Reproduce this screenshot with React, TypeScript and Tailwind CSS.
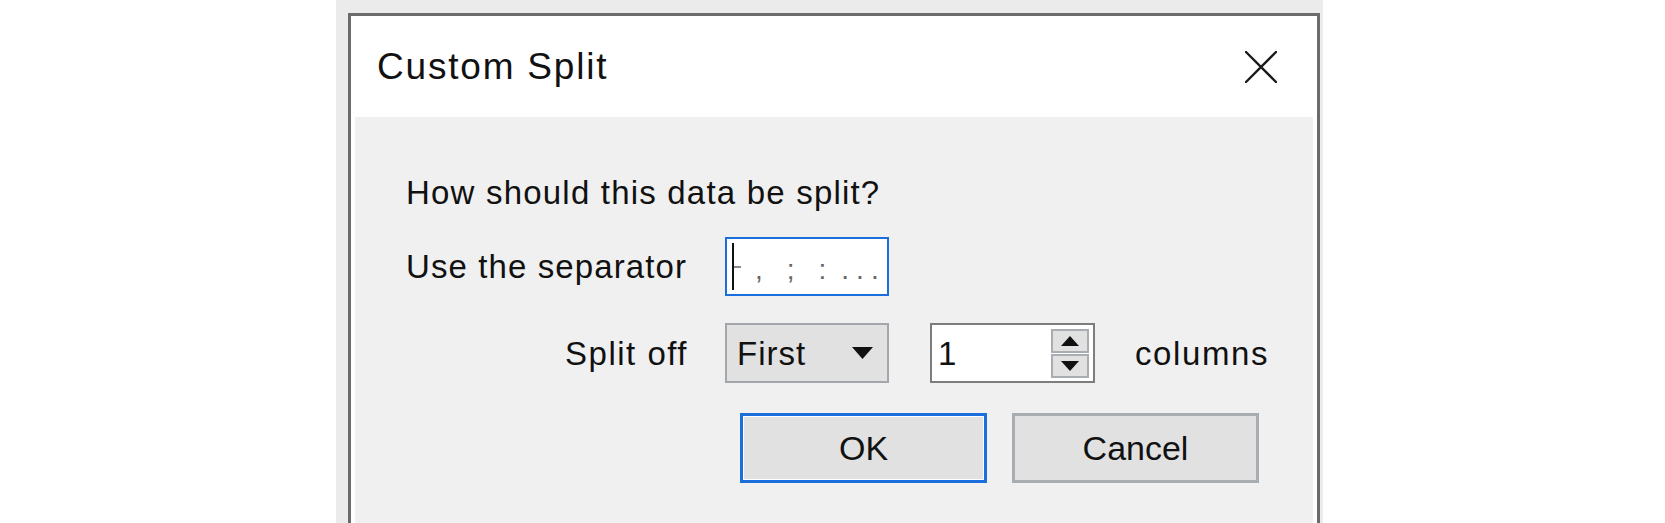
function SpinArrow({ up }: { up?: boolean }) {
  return (
    <svg width="18" height="10" viewBox="0 0 18 10">
      {up ? <polygon points="9,0 18,10 0,10" fill="#111" /> : <polygon points="0,0 18,0 9,10" fill="#111" />}
    </svg>
  );
}

function CloseIcon() {
  return (
    <svg width="32" height="32" viewBox="0 0 32 32">
      <path d="M1 1 L31 31 M31 1 L1 31" stroke="#1a1a1a" strokeWidth="2.4" strokeLinecap="round" />
    </svg>
  );
}

export default function App() {
  return (
    <div className="h-[523px] w-full bg-white flex overflow-hidden font-['Liberation_Sans',Arial,sans-serif] text-[#111]">
      <div className="ml-[336px] w-[987px] h-full bg-[#ebebeb] pt-[13px] pl-[12px] pr-[3px]">
        <div className="h-full flex flex-col bg-white border-[3px] border-b-0 border-[#6b6b6b]">
          {/* title bar */}
          <div className="h-[101px] shrink-0 flex items-center justify-between pl-[26px] pr-[40px]">
            <h1 className="text-[37px] leading-[42px] tracking-[1.8px]">Custom Split</h1>
            <button className="w-[32px] h-[32px] flex items-center justify-center">
              <CloseIcon />
            </button>
          </div>

          {/* body */}
          <div className="flex-1 mx-[4px] bg-[#f0f0f0] pl-[51px] pt-[57px] text-[33px] leading-[37px]">
            <p className="tracking-[1.2px]">How should this data be split?</p>

            <div className="mt-[26px] flex items-center">
              <label className="w-[319px] tracking-[1.1px]">Use the separator</label>
              <div className="w-[164px] h-[59px] bg-white border-2 border-[#1a6fdc] flex items-center pl-[5px]">
                <div className="w-[2px] h-[47px] bg-[#111]" />
                <div className="w-[7px] h-[2px] bg-[#8a8a8a] self-center" />
                <div className="flex items-end self-end mb-[10px] text-[28px] leading-none text-[#666]">
                  <span className="ml-[14px]">,</span>
                  <span className="ml-[24px]">;</span>
                  <span className="ml-[24px]">:</span>
                  <span className="ml-[15px] tracking-[7px]">...</span>
                </div>
              </div>
            </div>

            <div className="mt-[27px] flex items-center">
              <label className="w-[282px] text-right tracking-[1.5px]">Split off</label>
              <div className="ml-[37px] w-[164px] h-[60px] bg-[#e1e1e1] border-2 border-[#a3a7ab] flex items-center justify-between pl-[10px] pr-[14px]">
                <span className="tracking-[1px]">First</span>
                <svg width="21" height="12" viewBox="0 0 21 12">
                  <polygon points="0,0 21,0 10.5,12" fill="#111" />
                </svg>
              </div>
              <div className="ml-[41px] w-[165px] h-[60px] bg-white border-2 border-[#7d7d7d] flex items-center justify-between pl-[6px] pr-[4px]">
                <span>1</span>
                <div className="flex flex-col gap-[1px]">
                  <div className="w-[38px] h-[24px] bg-[#e1e1e1] border-2 border-[#a9adb1] flex items-center justify-center">
                    <SpinArrow up />
                  </div>
                  <div className="w-[38px] h-[24px] bg-[#e1e1e1] border-2 border-[#a9adb1] flex items-center justify-center">
                    <SpinArrow />
                  </div>
                </div>
              </div>
              <span className="ml-[40px] tracking-[1.6px]">columns</span>
            </div>

            <div className="mt-[30px] flex pl-[334px] gap-[25px] text-[34px]">
              <button className="w-[247px] h-[70px] bg-[#e1e1e1] border-[3px] border-[#1a6fdc] outline outline-1 outline-white -outline-offset-[4px]">
                OK
              </button>
              <button className="w-[247px] h-[70px] bg-[#e1e1e1] border-[3px] border-[#a9adb1]">Cancel</button>
            </div>
          </div>
        </div>
      </div>
    </div>
  );
}
